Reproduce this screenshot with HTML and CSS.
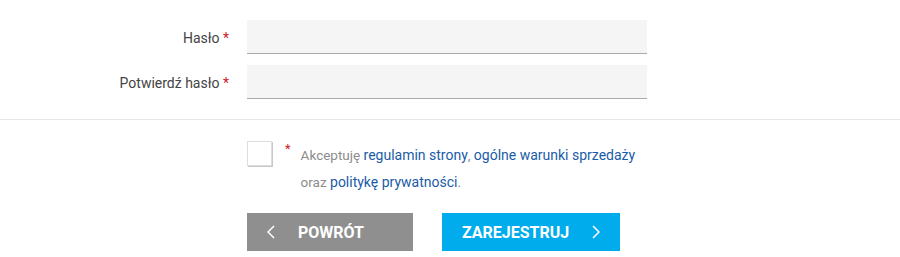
FILE: index.html
```html
<!DOCTYPE html>
<html lang="pl">

<head>
  <meta charset="UTF-8" />
  <title>Rejestracja</title>
  <meta name="viewport" content="width=device-width, initial-scale=1.0" />
  <link rel="stylesheet" href="styles.css">
</head>

<body>
  <main>
    <div class="fields">
      <div class="field">
        <label for="password">Hasło <span class="req">*</span></label>
        <input type="password" id="password" name="password" />
      </div>
      <div class="field">
        <label for="password2">Potwierdź hasło <span class="req">*</span></label>
        <input type="password" id="password2" name="password2" />
      </div>
    </div>

    <div class="terms">
      <span class="checkbox"></span>
      <span class="req">*</span>
      <p>
        Akceptuję <a href="#">regulamin strony</a>, <a href="#">ogólne warunki sprzedaży</a><br>
        oraz <a href="#">politykę prywatności</a>.
      </p>
    </div>

    <div class="actions">
      <button class="back">
        <svg width="8" height="14" viewBox="0 0 8 14"><path d="M7 1L1 7l6 6" fill="none" stroke="#fff" stroke-width="1.5" /></svg>
        <span>Powrót</span>
      </button>
      <button class="submit">
        <span>Zarejestruj</span>
        <svg width="8" height="14" viewBox="0 0 8 14"><path d="M1 1l6 6-6 6" fill="none" stroke="#fff" stroke-width="1.5" /></svg>
      </button>
    </div>
  </main>
</body>

</html>
```

FILE: styles.css
```css
:root {
  /* kolory */
  --color-text: #444;
  --color-muted: #8c8c8c;
  --color-link: #1a5ca6;
  --color-required: #d0202a;
  --color-line: #e6e6e6;
  --input-bg: #f5f5f5;
  --input-line: #aaa;
  --btn-back: #8f8f8f;
  --btn-primary: #00acec;
}

body {
  margin: 0;
  font-family: Roboto, "Liberation Sans", sans-serif;
  color: var(--color-text);
  background: #fff;
}

.req {
  color: var(--color-required);
}

/* pola hasła */
.fields {
  display: flex;
  flex-direction: column;
  gap: 11px;
  padding: 20px 0 20px;
  border-bottom: 1px solid var(--color-line);
}

.field {
  display: grid;
  grid-template-columns: 229px 400px;
  column-gap: 18px;
  align-items: center;
}

.field>label {
  text-align: right;
  font-size: 14px;
  padding-top: 2px;
}

.field>input {
  box-sizing: border-box;
  height: 34px;
  border: 0;
  border-bottom: 1px solid var(--input-line);
  background: var(--input-bg);
  padding: 0 10px;
  font-size: 14px;
}

/* zgody */
.terms {
  display: flex;
  align-items: flex-start;
  padding: 21px 0 0 247px;
}

.terms>.checkbox {
  box-sizing: border-box;
  width: 25px;
  height: 25px;
  border: 1px solid #ddd;
  box-shadow: 1px 1px 0 #c8c8c8;
  background: #fff;
}

.terms>.req {
  font-size: 13px;
  margin: 0 0 0 13px;
}

.terms>p {
  margin: 0 0 0 10px;
  font-size: 13.5px;
  line-height: 27px;
  color: var(--color-muted);
  padding-top: 1px;
}

.terms a {
  color: var(--color-link);
  text-decoration: none;
  font-size: 14px;
}

/* przyciski */
.actions {
  display: flex;
  gap: 29px;
  padding: 17px 0 0 247px;
}

.actions>button {
  display: flex;
  align-items: center;
  height: 38px;
  border: 0;
  color: #fff;
  font-family: Roboto, "Liberation Sans", sans-serif;
  font-weight: bold;
  font-size: 16px;
  text-transform: uppercase;
  cursor: pointer;
}

button.back {
  width: 166px;
  background: var(--btn-back);
  padding: 0 0 0 20px;
  gap: 23px;
}

button.submit {
  width: 178px;
  background: var(--btn-primary);
  padding: 0 0 0 20px;
  gap: 23px;
}
```
